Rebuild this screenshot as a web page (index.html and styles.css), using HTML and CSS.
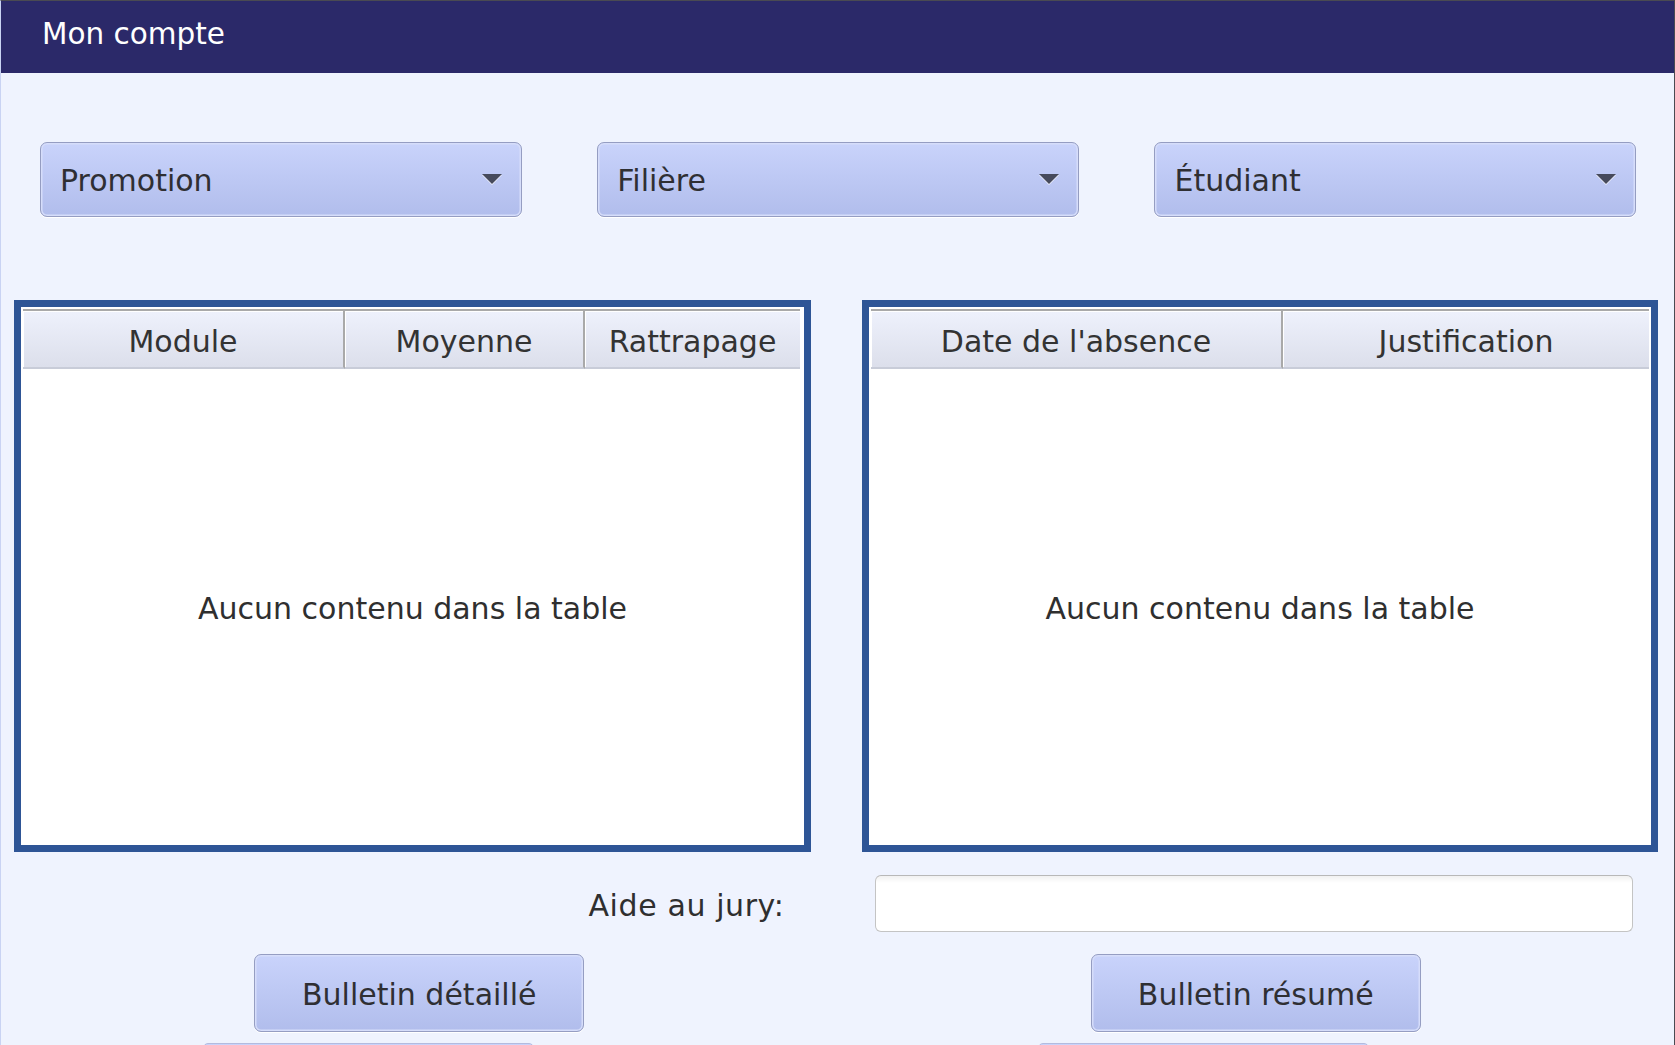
FILE: index.html
```html
<!DOCTYPE html>
<html lang="fr">
<head>
<meta charset="utf-8">
<title>Mon compte</title>
<link rel="stylesheet" href="styles.css">
</head>
<body>
<div class="app">
  <header class="titlebar">Mon compte</header>

  <div class="filters">
    <div class="combo"><span class="combo-label">Promotion</span><svg class="arrow" width="20" height="12" viewBox="0 0 20 12"><polygon points="0,1 20,1 10,11" fill="#fff" opacity="0.8"/><polygon points="0,0 20,0 10,10" fill="#464a5c"/></svg></div>
    <div class="combo"><span class="combo-label">Filière</span><svg class="arrow" width="20" height="12" viewBox="0 0 20 12"><polygon points="0,1 20,1 10,11" fill="#fff" opacity="0.8"/><polygon points="0,0 20,0 10,10" fill="#464a5c"/></svg></div>
    <div class="combo"><span class="combo-label">Étudiant</span><svg class="arrow" width="20" height="12" viewBox="0 0 20 12"><polygon points="0,1 20,1 10,11" fill="#fff" opacity="0.8"/><polygon points="0,0 20,0 10,10" fill="#464a5c"/></svg></div>
  </div>

  <div class="tables">
    <div class="table table-left">
      <div class="thead">
        <div class="th col-module">Module</div>
        <div class="th col-moyenne">Moyenne</div>
        <div class="th col-rattrapage">Rattrapage</div>
      </div>
      <div class="tbody">Aucun contenu dans la table</div>
    </div>
    <div class="table table-right">
      <div class="thead">
        <div class="th col-date">Date de l'absence</div>
        <div class="th col-justif">Justification</div>
      </div>
      <div class="tbody">Aucun contenu dans la table</div>
    </div>
  </div>

  <div class="bottom">
    <label class="jury-label" for="jury">Aide au jury:</label>
    <input class="jury-field" id="jury" type="text">
    <button class="btn">Bulletin détaillé</button>
    <button class="btn">Bulletin résumé</button>
    <div class="ghost ghost-left"></div>
    <div class="ghost ghost-right"></div>
  </div>
</div>
</body>
</html>
```

FILE: styles.css
```css
* { box-sizing: border-box; }

html, body {
  margin: 0;
  padding: 0;
}

body {
  width: 1675px;
  height: 1045px;
  overflow: hidden;
  background: #eff3fe;
  font-family: "DejaVu Sans", Verdana, sans-serif;
  color: #333333;
}

.app {
  width: 1675px;
  height: 1045px;
  overflow: hidden;
  border-top: 1px solid #4a4a52;
  border-right: 1px solid #4a4a52;
  border-left: 1px solid #c9d3f3;
  background: #eff3fe;
}

.titlebar {
  height: 72px;
  line-height: 66px;
  background: #2b2969;
  color: #ffffff;
  font-size: 29.5px;
  padding-left: 41px;
}

/* Filters */
.filters {
  display: flex;
  justify-content: space-between;
  margin-top: 69px;
  padding: 0 38px 0 38.5px;
}

.combo {
  width: 482px;
  height: 75px;
  display: flex;
  align-items: center;
  justify-content: space-between;
  padding: 2px 19px 0 19.5px;
  border: 1.5px solid #959dc2;
  border-radius: 7px;
  background: linear-gradient(#c9d3fb, #b1bdec);
  box-shadow: inset 0 0 0 1.5px #d6ddfa, 0 1px 0 #ffffff;
  font-size: 30px;
  color: #2f2f33;
}

.arrow { display: block; margin-top: -1px; }

/* Tables */
.tables {
  display: flex;
  gap: 51px;
  margin-top: 83px;
  padding-left: 13px;
}

.table {
  height: 552px;
  border: 7px solid #2e5596;
  padding: 2px;
  background: #ffffff;
  display: flex;
  flex-direction: column;
}

.table-left { width: 797px; }
.table-right { width: 796px; }

.thead {
  display: flex;
  height: 60px;
  flex: none;
}

.th {
  height: 60px;
  display: flex;
  align-items: center;
  justify-content: center;
  padding-top: 4px;
  font-size: 30px;
  color: #333333;
  background: linear-gradient(#eef1fc, #dcdfeb);
  border-top: 2px solid #a9a9a9;
  border-right: 2px solid #a9a9a9;
  border-bottom: 2px solid #c8ccd8;
  box-shadow: inset 1px 1px 0 #ffffff;
}

.th:last-child { border-right: none; }

.col-module { width: 322px; }
.col-moyenne { width: 240px; }
.col-rattrapage { width: 215px; }
.col-date { width: 412px; }
.col-justif { width: 366px; }

.tbody {
  flex: 1;
  display: flex;
  align-items: center;
  justify-content: center;
  font-size: 30px;
  color: #2f2f2f;
  padding-top: 5px;
}

/* Bottom area */
.bottom {
  display: grid;
  grid-template-columns: 836.5px 836.5px;
  grid-template-rows: 57px 78px 20px;
  row-gap: 22px;
  margin-top: 23px;
}

.bottom > :nth-child(n+5) { margin-top: -11px; }

.jury-label {
  justify-self: end;
  align-self: center;
  padding-right: 53px;
  font-size: 30px;
  letter-spacing: 0.6px;
  color: #2f2f2f;
  padding-top: 4px;
}

.jury-field {
  margin-left: 37.5px;
  width: 758px;
  height: 57px;
  border: 1.5px solid #c4c4c4;
  border-top-color: #b8b8b8;
  border-radius: 6px;
  background: linear-gradient(#f1f1f1 0, #ffffff 7px, #ffffff 100%);
  font-family: inherit;
  font-size: 30px;
  outline: none;
}

.btn {
  justify-self: center;
  width: 330px;
  height: 78px;
  border: 1.5px solid #959dc2;
  border-radius: 7px;
  background: linear-gradient(#c9d3fb, #b1bdec);
  box-shadow: inset 0 0 0 1.5px #d6ddfa, 0 1px 0 #ffffff;
  font-family: inherit;
  font-size: 30px;
  color: #2f2f33;
  padding: 2px 0 0;
}

.ghost {
  justify-self: start;
  width: 331px;
  height: 40px;
  border: 1.5px solid #b3bbdf;
  border-radius: 5px;
  background: linear-gradient(#c9d3fb, #b1bdec);
}

.ghost-left { margin-left: 202px; }
.ghost-right { margin-left: 200.5px; }
```
